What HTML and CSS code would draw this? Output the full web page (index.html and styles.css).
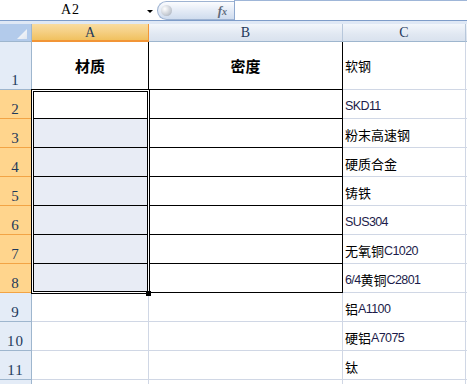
FILE: index.html
```html
<!DOCTYPE html>
<html>
<head>
<meta charset="utf-8">
<link rel="stylesheet" href="styles.css">
</head>
<body>
<div class="fbar">
  <div class="namebox"><span class="nb-text">A2</span><span class="nb-arrow"></span></div>
  <div class="fxbtn"><span class="knob"></span><span class="fx">f<span class="x">x</span></span></div>
  <div class="finput"></div>
</div>
<div class="strip"></div>
<div class="sheet">
  <div class="corner"><span class="tri"></span></div>
  <div class="ch sel">A</div>
  <div class="ch">B</div>
  <div class="ch">C</div>
  <div class="ch rest"></div>

  <div class="rh r1">1</div>
  <div class="c tb hd">材质</div>
  <div class="c tb hd">密度</div>
  <div class="c cc mid">软钢</div>
  <div class="c cr"></div>

  <div class="rh sel">2</div>
  <div class="c tb act"></div>
  <div class="c tb"></div>
  <div class="c cc"><span class="lat">SKD11</span></div>
  <div class="c cr"></div>

  <div class="rh sel">3</div>
  <div class="c tb hl"></div>
  <div class="c tb"></div>
  <div class="c cc">粉末高速钢</div>
  <div class="c cr"></div>

  <div class="rh sel">4</div>
  <div class="c tb hl"></div>
  <div class="c tb"></div>
  <div class="c cc">硬质合金</div>
  <div class="c cr"></div>

  <div class="rh sel">5</div>
  <div class="c tb hl"></div>
  <div class="c tb"></div>
  <div class="c cc">铸铁</div>
  <div class="c cr"></div>

  <div class="rh sel">6</div>
  <div class="c tb hl"></div>
  <div class="c tb"></div>
  <div class="c cc"><span class="lat">SUS304</span></div>
  <div class="c cr"></div>

  <div class="rh sel">7</div>
  <div class="c tb hl"></div>
  <div class="c tb"></div>
  <div class="c cc">无氧铜<span class="lat">C1020</span></div>
  <div class="c cr"></div>

  <div class="rh sel">8</div>
  <div class="c tb hl"></div>
  <div class="c tb"></div>
  <div class="c cc"><span class="lat">6/4</span>黄铜<span class="lat">C2801</span></div>
  <div class="c cr"></div>

  <div class="rh">9</div>
  <div class="c"></div>
  <div class="c"></div>
  <div class="c cc">铝<span class="lat">A1100</span></div>
  <div class="c cr"></div>

  <div class="rh">10</div>
  <div class="c"></div>
  <div class="c"></div>
  <div class="c cc">硬铝<span class="lat">A7075</span></div>
  <div class="c cr"></div>

  <div class="rh">11</div>
  <div class="c"></div>
  <div class="c"></div>
  <div class="c cc">钛</div>
  <div class="c cr"></div>

  <div class="rh"></div>
  <div class="c"></div>
  <div class="c"></div>
  <div class="c cc"></div>
  <div class="c cr"></div>
</div>
<div class="selbox"></div>
<div class="handle"></div>
</body>
</html>
```
FILE: styles.css
```css
html, body {
  margin: 0;
  padding: 0;
  width: 467px;
  height: 384px;
  overflow: hidden;
  background: #fff;
  font-family: "Liberation Sans", "Noto Sans CJK SC", sans-serif;
}
body { position: relative; }

.fbar {
  display: flex;
  height: 20px;
  border-bottom: 1px solid #7d9cc9;
  background: #fff;
}
.namebox {
  width: 157px;
  display: flex;
  align-items: center;
  position: relative;
}
.nb-text {
  font-family: "Liberation Serif", serif;
  font-size: 14px;
  color: #000;
  margin-left: 61px;
  letter-spacing: 1px;
}
.nb-arrow {
  position: absolute;
  left: 147px;
  top: 10px;
  width: 0;
  height: 0;
  border-left: 3px solid transparent;
  border-right: 3px solid transparent;
  border-top: 3px solid #000;
}
.fxbtn {
  width: 77px;
  margin-top: 1px;
  height: 19px;
  border: 1px solid #9eb3d2;
  border-radius: 10px 0 0 10px;
  border-right: none;
  background: linear-gradient(#fbfcfe, #e4ebf6 50%, #cfdcee);
  display: flex;
  align-items: center;
  justify-content: space-between;
  box-sizing: border-box;
}
.knob {
  width: 11px;
  height: 11px;
  border-radius: 50%;
  margin-left: 3px;
  background: radial-gradient(circle at 35% 35%, #ffffff, #c7ccd4 60%, #9aa3ae);
}
.fx {
  font-family: "Liberation Serif", serif;
  font-style: italic;
  font-weight: bold;
  font-size: 13px;
  color: #5f6b7c;
  margin-right: 7px;
}
.fx .x { font-size: 10px; }
.finput {
  flex: 1;
  border-left: 1px solid #8fa9cf;
  border-top: 1px solid #9fb6d8;
  box-sizing: border-box;
  background: #fff;
}
.strip {
  height: 3px;
  background: #dfe8f5;
}

.sheet {
  display: grid;
  grid-template-columns: 32px 117px 194px 123px 1fr;
  grid-template-rows: 18px 48px repeat(11, 29px);
}
.sheet > div { box-sizing: border-box; }

.corner {
  background: #b3cbeb;
  border-right: 1px solid #9eb6ce;
  border-bottom: 1px solid #9eb6ce;
  position: relative;
}
.tri {
  position: absolute;
  right: 4px;
  bottom: 2px;
  width: 10px;
  height: 10px;
  background: linear-gradient(135deg, #ffffff, #dfe6f0);
  clip-path: polygon(100% 0, 100% 100%, 0 100%);
}
.ch {
  background: linear-gradient(#f2f6fb, #e1e8f2 60%, #d9e2ee);
  border-right: 1px solid #b7c7db;
  border-bottom: 1px solid #9eb6ce;
  font-family: "Liberation Serif", serif;
  font-size: 14px;
  color: #1e395b;
  display: flex;
  align-items: center;
  justify-content: center;
  padding-top: 1px;
}
.ch.sel {
  background: linear-gradient(#f9dca0, #f5cf83 50%, #f1c15f);
  border-right: 1px solid #f29536;
  border-bottom: 2px solid #f29536;
}
.ch.rest { border-right: none; }

.rh {
  background: #e4ecf7;
  border-right: 1px solid #9eb6ce;
  border-bottom: 1px solid #9eb6ce;
  font-family: "Liberation Serif", serif;
  font-size: 15px;
  color: #1e395b;
  display: flex;
  align-items: flex-end;
  justify-content: center;
  padding-bottom: 1px;
  line-height: 15px;
  letter-spacing: 1px;
}
.rh.sel {
  background: #ffd58d;
  border-right: 1px solid #f29536;
  border-bottom: 1px solid #f2a445;
}

.c {
  border-right: 1px solid #d0d7e5;
  border-bottom: 1px solid #d0d7e5;
  background: #fff;
}
.c.tb {
  border-right: 1px solid #000;
  border-bottom: 1px solid #000;
}
.c.hl { background: #e8ecf5; }
.c.hd {
  font-family: "Noto Sans CJK SC", sans-serif;
  font-weight: bold;
  font-size: 15px;
  display: flex;
  align-items: center;
  justify-content: center;
  color: #000;
}
.c.cc {
  font-family: "Noto Sans CJK SC", sans-serif;
  font-size: 13px;
  color: #000;
  display: flex;
  align-items: center;
  padding-left: 2px;
  padding-top: 3px;
  white-space: nowrap;
}
.c.cc.mid { padding-top: 0; }
.lat {
  font-family: "Liberation Sans", sans-serif;
  font-size: 12.5px;
  letter-spacing: -0.6px;
  color: #1c1c4a;
}
.c.cr { border-right: none; }

.selbox {
  position: absolute;
  left: 31px;
  top: 89px;
  width: 119px;
  height: 205px;
  box-sizing: border-box;
  border: 1px solid #000;
  box-shadow: inset 0 0 0 1px #fff, inset 0 0 0 2px #000;
  pointer-events: none;
}
.handle {
  position: absolute;
  left: 146px;
  top: 291px;
  width: 5px;
  height: 5px;
  background: #000;
}
```
